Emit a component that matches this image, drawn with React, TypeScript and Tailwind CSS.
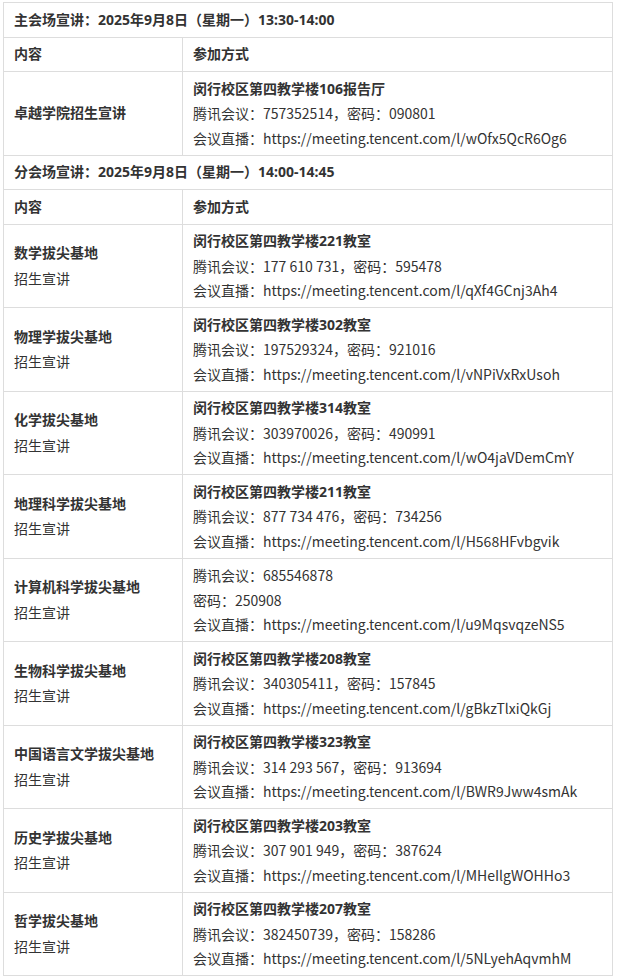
import React from "react";

type Row = {
  name: string;
  sub?: string;
  lines: { text: string; bold?: boolean }[];
};

const rows: Row[] = [
  { name: "数学拔尖基地", sub: "招生宣讲", lines: [
    { text: "闵行校区第四教学楼221教室", bold: true },
    { text: "腾讯会议：177 610 731，密码：595478" },
    { text: "会议直播：https://meeting.tencent.com/l/qXf4GCnj3Ah4" },
  ]},
  { name: "物理学拔尖基地", sub: "招生宣讲", lines: [
    { text: "闵行校区第四教学楼302教室", bold: true },
    { text: "腾讯会议：197529324，密码：921016" },
    { text: "会议直播：https://meeting.tencent.com/l/vNPiVxRxUsoh" },
  ]},
  { name: "化学拔尖基地", sub: "招生宣讲", lines: [
    { text: "闵行校区第四教学楼314教室", bold: true },
    { text: "腾讯会议：303970026，密码：490991" },
    { text: "会议直播：https://meeting.tencent.com/l/wO4jaVDemCmY" },
  ]},
  { name: "地理科学拔尖基地", sub: "招生宣讲", lines: [
    { text: "闵行校区第四教学楼211教室", bold: true },
    { text: "腾讯会议：877 734 476，密码：734256" },
    { text: "会议直播：https://meeting.tencent.com/l/H568HFvbgvik" },
  ]},
  { name: "计算机科学拔尖基地", sub: "招生宣讲", lines: [
    { text: "腾讯会议：685546878" },
    { text: "密码：250908" },
    { text: "会议直播：https://meeting.tencent.com/l/u9MqsvqzeNS5" },
  ]},
  { name: "生物科学拔尖基地", sub: "招生宣讲", lines: [
    { text: "闵行校区第四教学楼208教室", bold: true },
    { text: "腾讯会议：340305411，密码：157845" },
    { text: "会议直播：https://meeting.tencent.com/l/gBkzTlxiQkGj" },
  ]},
  { name: "中国语言文学拔尖基地", sub: "招生宣讲", lines: [
    { text: "闵行校区第四教学楼323教室", bold: true },
    { text: "腾讯会议：314 293 567，密码：913694" },
    { text: "会议直播：https://meeting.tencent.com/l/BWR9Jww4smAk" },
  ]},
  { name: "历史学拔尖基地", sub: "招生宣讲", lines: [
    { text: "闵行校区第四教学楼203教室", bold: true },
    { text: "腾讯会议：307 901 949，密码：387624" },
    { text: "会议直播：https://meeting.tencent.com/l/MHeIlgWOHHo3" },
  ]},
  { name: "哲学拔尖基地", sub: "招生宣讲", lines: [
    { text: "闵行校区第四教学楼207教室", bold: true },
    { text: "腾讯会议：382450739，密码：158286" },
    { text: "会议直播：https://meeting.tencent.com/l/5NLyehAqvmhM" },
  ]},
];

const td = "border border-[#dddddd] px-[10px] py-[4.5px] align-middle";
const B = "font-bold font-['Noto_Sans','Noto_Sans_CJK_SC',sans-serif]";

function DataRow({ r }: { r: Row }) {
  return (
    <tr>
      <td className={td}>
        <div className={B}>{r.name}</div>
        {r.sub && <div>{r.sub}</div>}
      </td>
      <td className={td}>
        {r.lines.map((l, i) => (
          <div key={i} className={l.bold ? B : ""}>{l.text}</div>
        ))}
      </td>
    </tr>
  );
}

export default function App() {
  return (
    <div
      className="bg-white pl-[3px] pt-[2px] pr-[4px] text-[14px] leading-[24.5px] text-[#333333] font-['Noto_Sans_CJK_SC','Noto_Sans',sans-serif]"
    >
      <table className="w-[610px] border-collapse table-fixed">
        <colgroup>
          <col className="w-[179px]" />
          <col />
        </colgroup>
        <tbody>
          <tr>
            <td colSpan={2} className={td + " " + B}>
              主会场宣讲：2025年9月8日（星期一）13:30-14:00
            </td>
          </tr>
          <tr>
            <td className={td + " " + B}>内容</td>
            <td className={td + " " + B}>参加方式</td>
          </tr>
          <tr>
            <td className={td + " " + B}>卓越学院招生宣讲</td>
            <td className={td}>
              <div className={B}>闵行校区第四教学楼106报告厅</div>
              <div>腾讯会议：757352514，密码：090801</div>
              <div>会议直播：https://meeting.tencent.com/l/wOfx5QcR6Og6</div>
            </td>
          </tr>
          <tr>
            <td colSpan={2} className={td + " " + B}>
              分会场宣讲：2025年9月8日（星期一）14:00-14:45
            </td>
          </tr>
          <tr>
            <td className={td + " " + B}>内容</td>
            <td className={td + " " + B}>参加方式</td>
          </tr>
          {rows.map((r, i) => (
            <DataRow key={i} r={r} />
          ))}
        </tbody>
      </table>
    </div>
  );
}
